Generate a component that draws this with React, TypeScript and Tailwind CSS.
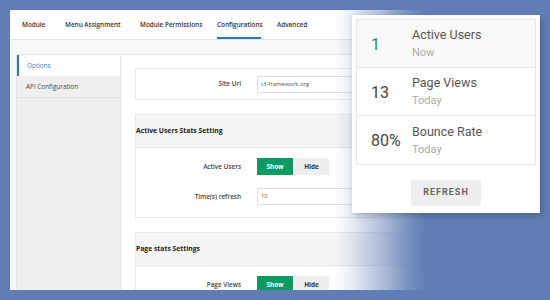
import React from "react";

const adminFont = { fontFamily: '"Open Sans", "Liberation Sans", sans-serif' };
const cardFont = { fontFamily: 'Roboto, "Liberation Sans", sans-serif' };

function ToggleRow({ label }: { label: string }) {
  return (
    <div className="flex items-center h-[17px] shrink-0">
      <div className="w-[105px] text-right text-[6.4px] text-[#444] font-semibold">{label}</div>
      <div className="ml-[16px] flex h-[17px]">
        <div className="w-[36px] bg-[#0e9a62] text-white text-[6.4px] font-bold flex items-center justify-center">Show</div>
        <div className="w-[35px] ml-[1px] bg-[#eeeeee] text-[#333] text-[6.4px] font-bold flex items-center justify-center">Hide</div>
      </div>
    </div>
  );
}

function InputRow({ label, value }: { label: string; value: string }) {
  return (
    <div className="flex items-center h-[17px] shrink-0 w-full">
      <div className="w-[105px] text-right text-[6.4px] text-[#444] font-semibold">{label}</div>
      <div className="ml-[16px] flex-1 h-[17px] border border-[#dddddd] bg-white flex items-center pl-[3px] text-[5.9px] text-[#555]">{value}</div>
    </div>
  );
}

function Section({ title, children }: { title: string; children: React.ReactNode }) {
  return (
    <div className="border border-[#e8e8e8] bg-white shrink-0">
      <div className="h-[33px] bg-[#f5f5f6] border-b border-[#e6e6e6] flex items-center text-[6.8px] font-bold text-[#222]">{title}</div>
      <div className="pt-[10px] pb-[12px] flex flex-col gap-[13px]">{children}</div>
    </div>
  );
}

function StatRow({ value, title, sub, green, shade }: { value: string; title: string; sub: string; green?: boolean; shade?: boolean }) {
  return (
    <div className={`h-[48px] flex items-center border-b border-[#e4e4e4] last:border-b-0 ${shade ? "bg-[#f9f9f9]" : "bg-white"}`}>
      <div className={`w-[55px] pl-[14px] text-[16px] leading-none font-normal pt-[2px] ${green ? "text-[#17945c]" : "text-[#444]"}`}>{value}</div>
      <div className="flex flex-col">
        <div className="text-[12.5px] leading-[16px] text-[#555] font-normal">{title}</div>
        <div className="text-[11px] leading-[15px] mt-[2px] text-[#aaaaaa] font-normal">{sub}</div>
      </div>
    </div>
  );
}

export default function App() {
  return (
    <div className="relative w-[550px] h-[300px] overflow-hidden bg-[#607eb5]">
      <div className="pt-[10px] pl-[10px]">
        <div className="h-[280px] bg-white flex flex-col overflow-hidden" style={adminFont}>
          <div className="h-[30px] shrink-0 flex items-center border-b border-[#e4e4e4] text-[6.4px] font-semibold text-[#333] pl-[12px]">
            <div className="w-[43px]">Module</div>
            <div className="w-[75px]">Menu Assignment</div>
            <div className="w-[77px]">Module Permissions</div>
            <div className="relative w-[44px] mr-[16px] h-full flex items-center">
              Configurations
              <div className="absolute left-0 right-0 bottom-0 h-[2px] bg-[#1f7dc6]" />
            </div>
            <div>Advanced</div>
          </div>
          <div className="flex-1 min-h-0 bg-[#f8f8f8] pt-[14px] pl-[6px] flex flex-col">
            <div className="flex-1 min-h-0 flex bg-white border-t border-[#e6e6e6]">
              <div className="w-[105px] shrink-0 bg-[#efefef] border-x border-[#e4e4e4] flex flex-col">
                <div className="h-[21px] bg-white border-l-2 border-[#1f7dc6] flex items-center pl-[8px] text-[6.4px] text-[#2c86d0]">Options</div>
                <div className="h-[22px] border-b border-[#e2e2e2] flex items-center pl-[9px] text-[6.4px] text-[#444]">API Configuration</div>
              </div>
              <div className="flex-1 min-h-0 pl-[14px] pt-[13px] flex flex-col gap-[14px]">
                <div className="h-[32px] shrink-0 border border-[#e8e8e8] flex items-center">
                  <InputRow label="Site Url" value="t3-framework.org" />
                </div>
                <Section title="Active Users Stats Setting">
                  <ToggleRow label="Active Users" />
                  <InputRow label="Time(s) refresh" value="10" />
                </Section>
                <Section title="Page stats Settings">
                  <ToggleRow label="Page Views" />
                </Section>
              </div>
            </div>
          </div>
        </div>
      </div>
      <div className="absolute left-[335px] top-0 w-[215px] h-[300px] bg-[linear-gradient(to_right,rgba(96,126,181,0)_0%,rgba(96,126,181,0.15)_8%,rgba(96,126,181,0.5)_22%,rgba(96,126,181,0.85)_34%,#607eb5_42%)]" />
      <div className="absolute left-[352px] top-[15px] w-[188px] h-[198px] bg-white shadow-[2px_2px_6px_rgba(0,0,0,0.25)] p-[4px] flex flex-col items-center" style={cardFont}>
        <div className="w-full border border-[#e4e4e4]">
          <StatRow value="1" title="Active Users" sub="Now" green shade />
          <StatRow value="13" title="Page Views" sub="Today" />
          <StatRow value="80%" title="Bounce Rate" sub="Today" />
        </div>
        <div className="mt-[15px] w-[70px] h-[26px] bg-[#eeeeee] rounded-[2px] flex items-center justify-center text-[9px] font-bold tracking-[1px] text-[#666]">REFRESH</div>
      </div>
    </div>
  );
}
